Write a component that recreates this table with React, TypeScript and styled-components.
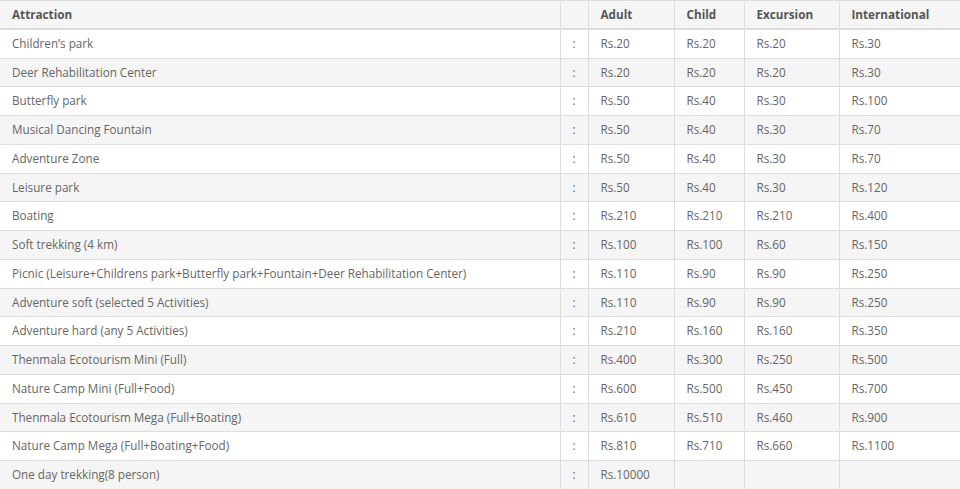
import styled, { createGlobalStyle } from 'styled-components';

type Fare = {
  name: string;
  adult: string;
  child?: string;
  excursion?: string;
  international?: string;
};

const fares: Fare[] = [
  { name: 'Children’s park', adult: 'Rs.20', child: 'Rs.20', excursion: 'Rs.20', international: 'Rs.30' },
  { name: 'Deer Rehabilitation Center', adult: 'Rs.20', child: 'Rs.20', excursion: 'Rs.20', international: 'Rs.30' },
  { name: 'Butterfly park', adult: 'Rs.50', child: 'Rs.40', excursion: 'Rs.30', international: 'Rs.100' },
  { name: 'Musical Dancing Fountain', adult: 'Rs.50', child: 'Rs.40', excursion: 'Rs.30', international: 'Rs.70' },
  { name: 'Adventure Zone', adult: 'Rs.50', child: 'Rs.40', excursion: 'Rs.30', international: 'Rs.70' },
  { name: 'Leisure park', adult: 'Rs.50', child: 'Rs.40', excursion: 'Rs.30', international: 'Rs.120' },
  { name: 'Boating', adult: 'Rs.210', child: 'Rs.210', excursion: 'Rs.210', international: 'Rs.400' },
  { name: 'Soft trekking (4 km)', adult: 'Rs.100', child: 'Rs.100', excursion: 'Rs.60', international: 'Rs.150' },
  { name: 'Picnic (Leisure+Childrens park+Butterfly park+Fountain+Deer Rehabilitation Center)', adult: 'Rs.110', child: 'Rs.90', excursion: 'Rs.90', international: 'Rs.250' },
  { name: 'Adventure soft (selected 5 Activities)', adult: 'Rs.110', child: 'Rs.90', excursion: 'Rs.90', international: 'Rs.250' },
  { name: 'Adventure hard (any 5 Activities)', adult: 'Rs.210', child: 'Rs.160', excursion: 'Rs.160', international: 'Rs.350' },
  { name: 'Thenmala Ecotourism Mini (Full)', adult: 'Rs.400', child: 'Rs.300', excursion: 'Rs.250', international: 'Rs.500' },
  { name: 'Nature Camp Mini (Full+Food)', adult: 'Rs.600', child: 'Rs.500', excursion: 'Rs.450', international: 'Rs.700' },
  { name: 'Thenmala Ecotourism Mega (Full+Boating)', adult: 'Rs.610', child: 'Rs.510', excursion: 'Rs.460', international: 'Rs.900' },
  { name: 'Nature Camp Mega (Full+Boating+Food)', adult: 'Rs.810', child: 'Rs.710', excursion: 'Rs.660', international: 'Rs.1100' },
  { name: 'One day trekking(8 person)', adult: 'Rs.10000' },
];

const GlobalStyle = createGlobalStyle`
  body {
    margin: 0;
    background: #ffffff;
    font-family: "Open Sans", "Liberation Sans", sans-serif;
  }
`;

const Table = styled.table`
  width: 960px;
  border-collapse: collapse;
  table-layout: fixed;
  font-size: 11.7px;
  color: #666666;
`;

const Col = styled.col<{ w: number }>`
  width: ${(p) => p.w}px;
`;

const HeadRow = styled.tr`
  background: #f5f5f5;
`;

const Row = styled.tr<{ striped: boolean }>`
  background: ${(p) => (p.striped ? '#f5f5f5' : '#ffffff')};
`;

const Th = styled.th`
  text-align: left;
  font-weight: 700;
  color: #555555;
  padding: 4px 12px;
  line-height: 19px;
  border-top: 1px solid #dddddd;
  border-left: 1px solid #dddddd;
  border-bottom: 2px solid #dddddd;
  &:first-child {
    border-left: none;
  }
`;

const Td = styled.td`
  padding: 4px 12px;
  line-height: 19.73px;
  border-top: 1px solid #dddddd;
  border-left: 1px solid #dddddd;
  border-bottom: 1px solid #dddddd;
  white-space: nowrap;
  &:first-child {
    border-left: none;
  }
`;

export default function App() {
  return (
    <>
      <GlobalStyle />
      <Table>
        <colgroup>
          <Col w={560} />
          <Col w={28} />
          <Col w={86} />
          <Col w={70} />
          <Col w={95} />
          <Col w={121} />
        </colgroup>
        <thead>
          <HeadRow>
            <Th>Attraction</Th>
            <Th />
            <Th>Adult</Th>
            <Th>Child</Th>
            <Th>Excursion</Th>
            <Th>International</Th>
          </HeadRow>
        </thead>
        <tbody>
          {fares.map((f, i) => (
            <Row key={f.name} striped={i % 2 === 1}>
              <Td>{f.name}</Td>
              <Td>:</Td>
              <Td>{f.adult}</Td>
              <Td>{f.child}</Td>
              <Td>{f.excursion}</Td>
              <Td>{f.international}</Td>
            </Row>
          ))}
        </tbody>
      </Table>
    </>
  );
}
